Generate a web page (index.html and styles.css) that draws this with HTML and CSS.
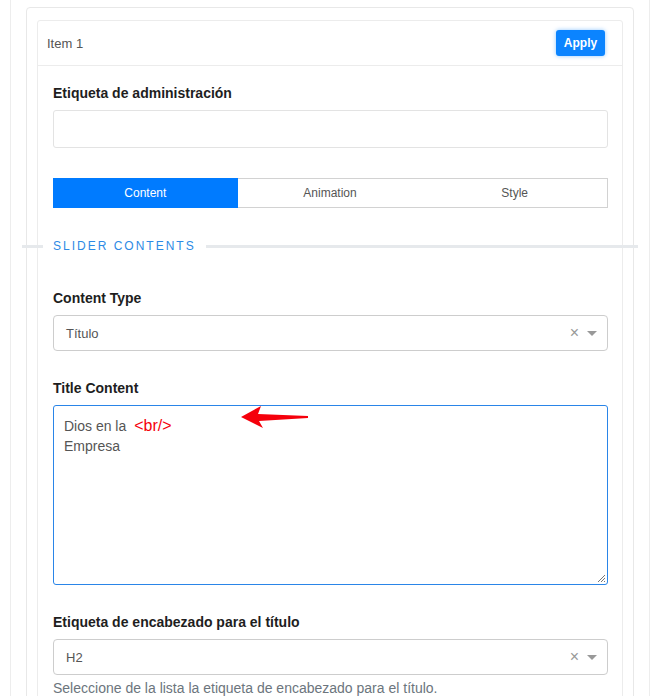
FILE: index.html
```html
<!DOCTYPE html>
<html lang="es">
<head>
<meta charset="utf-8">
<title>Slider item</title>
<link rel="stylesheet" href="styles.css">
</head>
<body>
<div class="outer">
  <div class="panel">
    <div class="card">
      <div class="card-header">
        <span class="item-title">Item 1</span>
        <button class="btn-apply">Apply</button>
      </div>
      <div class="card-body">
        <div class="field first">
          <div class="label">Etiqueta de administración</div>
          <div class="input"></div>
        </div>

        <div class="tabs">
          <div class="tab active">Content</div>
          <div class="tab">Animation</div>
          <div class="tab">Style</div>
        </div>

        <div class="divider"><span>SLIDER CONTENTS</span></div>

        <div class="field gap-lg">
          <div class="label">Content Type</div>
          <div class="select">
            <span class="select-value">Título</span>
            <span class="select-clear">×</span>
            <span class="select-caret"></span>
          </div>
        </div>

        <div class="field">
          <div class="label">Title Content</div>
          <div class="textarea">
            <div class="line">Dios en la <span class="br-note">&lt;br/&gt;</span></div>
            <div class="line">Empresa</div>
            <svg class="arrow" width="75" height="26" viewBox="0 0 75 26">
              <polygon points="2,13 22,2 19,10 69,12 69,14 20,17 24,24" fill="#f5000b"/>
            </svg>
            <svg class="grip" width="9" height="9" viewBox="0 0 9 9">
              <path d="M8 1 L1 8 M8 4 L4 8 M8 7 L7 8" stroke="#777" stroke-width="1" fill="none"/>
            </svg>
          </div>
        </div>

        <div class="field">
          <div class="label">Etiqueta de encabezado para el título</div>
          <div class="select">
            <span class="select-value">H2</span>
            <span class="select-clear">×</span>
            <span class="select-caret"></span>
          </div>
          <div class="help">Seleccione de la lista la etiqueta de encabezado para el título.</div>
        </div>
      </div>
    </div>
  </div>
</div>
</body>
</html>
```

FILE: styles.css
```css
* { box-sizing: border-box; }

html, body {
  margin: 0;
  padding: 0;
  background: #fff;
  overflow: hidden;
}

body {
  font-family: "Liberation Sans", Arial, sans-serif;
  color: #222;
}

.outer {
  margin-left: 10px;
  width: 640px;
  border-left: 1px solid #ededed;
  border-right: 1px solid #ededed;
  padding: 7px 0 0 15px;
}

.panel {
  width: 608px;
  border: 1px solid #e8e8e8;
  border-radius: 4px;
  padding: 12px 10px 0 10px;
}

.card {
  width: 586px;
  border: 1px solid #ececec;
  border-radius: 3px;
}

.card-header {
  height: 45px;
  border-bottom: 1px solid #ececec;
  display: flex;
  align-items: center;
  justify-content: space-between;
  padding: 0 17px 0 9px;
}

.item-title {
  font-size: 13px;
  color: #555;
}

.btn-apply {
  width: 49px;
  height: 26px;
  border: none;
  border-radius: 3px;
  background: #0b84ff;
  color: #fff;
  font-family: "Liberation Sans", Arial, sans-serif;
  font-size: 12px;
  font-weight: bold;
  padding: 0;
  box-shadow: 0 0 4px rgba(11, 132, 255, 0.45);
}

.card-body {
  padding: 18px 14px 80px 15px;
}

.field { margin-top: 28px; }
.field.first { margin-top: 0; }
.field.gap-lg { margin-top: 35px; }

.label {
  font-size: 14px;
  font-weight: bold;
  line-height: 18px;
  margin-bottom: 8px;
  color: #1e1e1e;
}

.input {
  height: 38px;
  border: 1px solid #e3e3e3;
  border-radius: 3px;
}

.tabs {
  margin-top: 30px;
  height: 30px;
  display: flex;
  border: 1px solid #d2d2d2;
}

.tab {
  flex: 1;
  display: flex;
  align-items: center;
  justify-content: center;
  font-size: 12px;
  color: #555;
}

.tab.active {
  background: #007bff;
  color: #fff;
  margin: -1px 0 -1px -1px;
}

.divider {
  margin: 30px -30px 0 -31px;
  height: 16px;
  display: flex;
  align-items: center;
}

.divider::before {
  content: "";
  width: 21px;
  height: 3px;
  background: #e6e9ec;
  margin-right: 10px;
}

.divider::after {
  content: "";
  flex: 1;
  height: 3px;
  background: #e6e9ec;
  margin-left: 10px;
}

.divider span {
  font-size: 12px;
  letter-spacing: 2px;
  color: #2d8ae5;
  line-height: 16px;
}

.select {
  height: 36px;
  border: 1px solid #cdcdcd;
  border-radius: 4px;
  display: flex;
  align-items: center;
  padding: 0 10px 0 12px;
}

.select-value {
  flex: 1;
  font-size: 13px;
  color: #555;
}

.select-clear {
  font-size: 16px;
  color: #999;
  line-height: 16px;
  margin-right: 8px;
}

.select-caret {
  width: 0;
  height: 0;
  border-left: 5px solid transparent;
  border-right: 5px solid transparent;
  border-top: 5px solid #999;
}

.textarea {
  position: relative;
  height: 180px;
  border: 1px solid #2a85e8;
  border-radius: 3px;
  padding: 10px 10px;
  font-size: 14px;
  line-height: 20px;
  color: #555;
}

.br-note {
  color: #f5000b;
  font-size: 16px;
  margin-left: 4px;
}

.arrow {
  position: absolute;
  left: 185px;
  top: -2px;
}

.grip {
  position: absolute;
  right: 1px;
  bottom: 1px;
}

.help {
  margin-top: 4px;
  font-size: 14px;
  line-height: 18px;
  color: #6c757d;
}
```
